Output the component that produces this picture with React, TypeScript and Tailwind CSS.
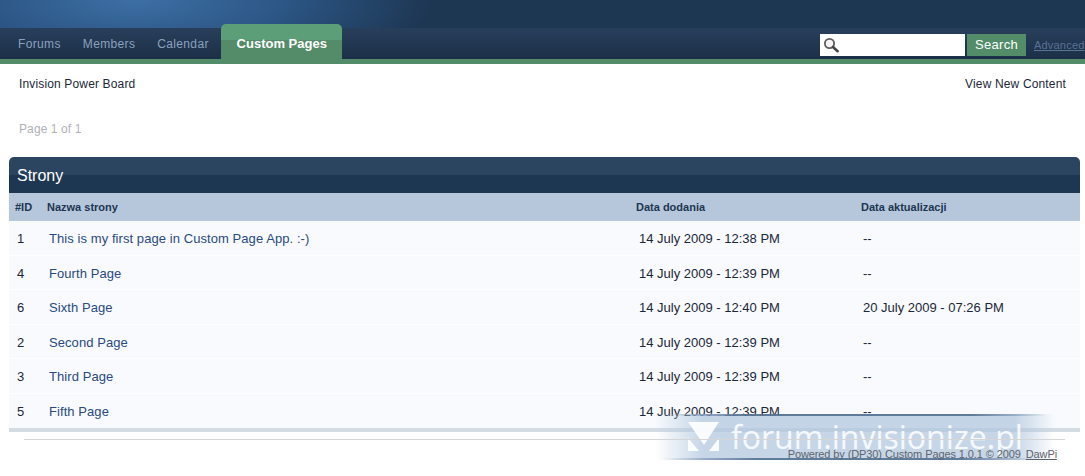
const rows = [
  { id: 1, name: "This is my first page in Custom Page App. :-)", added: "14 July 2009 - 12:38 PM", updated: "--" },
  { id: 4, name: "Fourth Page", added: "14 July 2009 - 12:39 PM", updated: "--" },
  { id: 6, name: "Sixth Page", added: "14 July 2009 - 12:40 PM", updated: "20 July 2009 - 07:26 PM" },
  { id: 2, name: "Second Page", added: "14 July 2009 - 12:39 PM", updated: "--" },
  { id: 3, name: "Third Page", added: "14 July 2009 - 12:39 PM", updated: "--" },
  { id: 5, name: "Fifth Page", added: "14 July 2009 - 12:39 PM", updated: "--" },
];

function SearchIcon() {
  return (
    <svg width="16" height="16" viewBox="0 0 16 16" className="shrink-0">
      <circle cx="6.5" cy="6.5" r="4.6" fill="#f5f5f5" stroke="#5c5c5c" strokeWidth="1.8" />
      <path d="M10 10l4.6 4.2" stroke="#444" strokeWidth="2.6" strokeLinecap="round" />
    </svg>
  );
}

function Watermark() {
  return (
    <div className="absolute left-[655px] top-[414px] h-[46px] w-[400px] pointer-events-none">
      <div className="absolute inset-0 bg-[linear-gradient(90deg,rgba(176,198,222,0)_0%,rgba(176,198,222,0.72)_12%,rgba(176,198,222,0.72)_90%,rgba(176,198,222,0)_100%)]" />
      <div className="absolute left-[14px] right-[8px] top-0 h-[2px] bg-[linear-gradient(90deg,rgba(70,100,135,0),rgba(70,100,135,0.8)_20%,rgba(70,100,135,0.8)_80%,rgba(70,100,135,0))]" />
      <div className="absolute left-[8px] right-[20px] bottom-0 h-[2px] bg-[linear-gradient(90deg,rgba(70,100,135,0),rgba(70,100,135,0.8)_25%,rgba(70,100,135,0.8)_80%,rgba(70,100,135,0))]" />
      <svg width="31" height="29" viewBox="0 0 31 29" className="absolute left-[33px] top-[8px]">
        <path d="M0 0h31L16 23z" fill="#fff" fillOpacity="0.9" />
        <path d="M0 16l11 13H0z" fill="#fff" fillOpacity="0.9" />
        <path d="M31 16v13H21z" fill="#fff" fillOpacity="0.9" />
      </svg>
      <span className="absolute left-[76px] top-[1px] font-['Open_Sans',sans-serif] text-[32px] font-normal leading-[44px] text-white/85 whitespace-nowrap">
        forum.invisionize.pl
      </span>
    </div>
  );
}

export default function App() {
  return (
    <div className="relative h-[476px] w-[1085px] overflow-hidden bg-white font-['Liberation_Sans',Arial,sans-serif] text-[12px] text-[#1c2837]">
      <div className="h-[28px] bg-[radial-gradient(ellipse_300px_90px_at_135px_0px,#3d6fa5_0%,#2c5685_50%,#1d3652_100%)]" />
      <div className="flex h-[31px] items-center justify-between bg-[linear-gradient(#283f5c,#1c2f47)]">
        <nav className="flex h-full items-center">
          <a className="ml-[18px] pt-[1px] tracking-[0.35px] text-[#8ba1bd]">Forums</a>
          <a className="ml-[22px] pt-[1px] tracking-[0.35px] text-[#8ba1bd]">Members</a>
          <a className="ml-[22px] pt-[1px] tracking-[0.35px] text-[#8ba1bd]">Calendar</a>
          <a className="mb-[-5px] ml-[12px] flex h-[40px] w-[121px] items-start justify-center self-end rounded-t-[5px] bg-[linear-gradient(#5b9e78_0,#5b9e78_40%,#548c69_40%,#548c69_100%)] pl-[1px] pt-[10px] text-[13px] font-bold text-white">
            Custom Pages
          </a>
        </nav>
        <div className="mt-[3px] flex items-center">
          <div className="flex h-[22px] w-[145px] items-center bg-white pl-[3px]">
            <SearchIcon />
          </div>
          <button className="ml-[2px] h-[22px] w-[59px] bg-[#528c68] text-[13px] tracking-[0.3px] text-white">Search</button>
          <a className="ml-[8px] w-[51px] overflow-hidden whitespace-nowrap text-[11px] tracking-[0.2px] text-[#5a7394] underline">Advanced</a>
        </div>
      </div>
      <div className="h-[5px] bg-[#528c68]" />

      <div className="flex justify-between px-[19px] pt-[13px] leading-[14px] tracking-[0.15px]">
        <a>Invision Power Board</a>
        <a>View New Content</a>
      </div>
      <p className="pl-[19px] pt-[31px] leading-[14px] tracking-[0.1px] text-[#b0b0b8]">Page 1 of 1</p>

      <section className="ml-[9px] mr-[5px] mt-[21px]">
        <h2 className="h-[36px] rounded-t-[5px] bg-[linear-gradient(#2b4561_0,#2b4561_50%,#1d3652_50%,#1d3652_100%)] pl-[8px] text-[16px] leading-[37px] text-white">
          Strony
        </h2>
        <div className="grid h-[28px] grid-cols-[38px_589px_225px_1fr] items-center bg-[#b6c7dc] pt-[1px] text-[11px] font-bold text-[#1d3652]">
          <span className="pl-[6px]">#ID</span>
          <span>Nazwa strony</span>
          <span>Data dodania</span>
          <span>Data aktualizacji</span>
        </div>
        <div className="flex flex-col gap-[1px] border-b-[4px] border-[#d3dce5] bg-white text-[13px]">
          {rows.map((row) => (
            <div key={row.id} className="grid h-[33.6px] grid-cols-[40px_590px_224px_1fr] items-center bg-[#f8fafd] pt-[2px]">
              <span className="pl-[8px]">{row.id}</span>
              <a className="tracking-[0.07px] text-[#2a4a80]">{row.name}</a>
              <span>{row.added}</span>
              <span>{row.updated}</span>
            </div>
          ))}
        </div>
      </section>

      <div className="relative z-10 ml-[24px] mr-[20px] mt-[7px] border-t border-[#d5d5d5] pt-[8px] text-right">
        <div className="pr-[8px] text-[11px] leading-[12px] tracking-[-0.1px] text-[#5f646b]">
          Powered by (DP30) Custom Pages 1.0.1 © 2009 <a className="ml-[2px] underline">DawPi</a>
        </div>
      </div>
      <Watermark />
    </div>
  );
}
